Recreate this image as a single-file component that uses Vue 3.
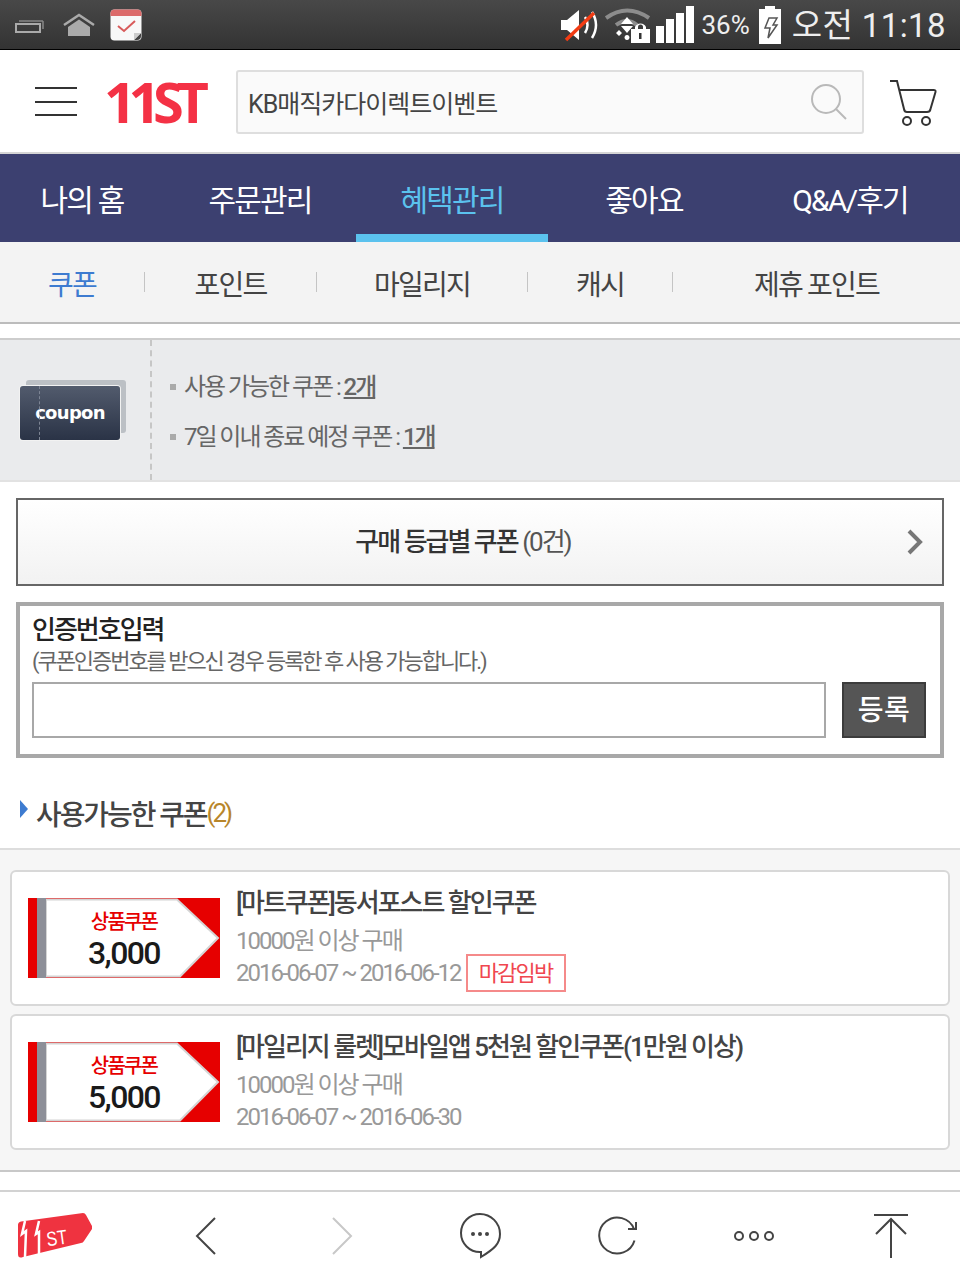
<template>
    <div class="page">
        <div class="status-bar">
            <div class="status-left">
                <svg class="ic-recent" width="30" height="16" viewBox="0 0 30 16" fill="none" stroke="#aaa" stroke-width="2">
                    <rect x="1" y="7" width="24" height="8" />
                    <path d="M4 4h24M28 4v8" stroke-width="1.5" stroke="#888" />
                </svg>
                <svg class="ic-home" width="32" height="24" viewBox="0 0 32 24">
                    <path d="M1 12L16 2l15 10" fill="none" stroke="#aaa" stroke-width="2.5" />
                    <path d="M5 14L16 6.500 27 14v9H5z" fill="#aaa" />
                </svg>
                <svg class="ic-cal" width="32" height="32" viewBox="0 0 32 32">
                    <rect width="31" height="31" x="0.500" y="0.500" rx="4" fill="#f8f8f8" />
                    <path d="M0.500 7V5a4 4 0 0 1 4-4.500h23a4 4 0 0 1 4 4.500v2z" fill="#dc6a6a" />
                    <path d="M8 17l6 5 11-10" fill="none" stroke="#d85a5a" stroke-width="2" />
                    <path d="M24 31l7-7v3a4 4 0 0 1-4 4z" fill="#444" />
                    <path d="M24 24h7l-7 7z" fill="#ccc" />
                </svg>
            </div>
            <div class="status-right">
                <svg width="40" height="34" viewBox="0 0 40 34" class="ic-sound">
                    <path d="M0 12h6l12-10v30l-12-10H0z" fill="#fff" />
                    <path d="M24 9q5 8 0 16M31 4q8 13 0 26" fill="none" stroke="#fff" stroke-width="2.500" />
                    <path d="M5 32L33 5" stroke="#f23c14" stroke-width="3.500" />
                </svg>
                <svg width="46" height="36" viewBox="0 0 46 36" class="ic-wifi">
                    <path d="M1 11q21-15 43 0" fill="none" stroke="#8c8c8c" stroke-width="4" />
                    <path d="M11 18q11-8 21 0" fill="none" stroke="#8c8c8c" stroke-width="4" />
                    <path d="M22 10l6 7H16zM16 19h12l-6 7z" fill="#fff" />
                    <path d="M14 23l-3 3 3 3 3-3zM22 28a2.500 2.500 0 1 0 .01 0z" fill="#fff" />
                    <path d="M30 22v-2a6 6 0 0 1 11 0v2h4v14H26V22z" fill="#fff" />
                    <path d="M33 22v-2a2.500 2.500 0 0 1 5 0v2z" fill="#3c3c3c" />
                    <rect x="34" y="26" width="2.500" height="6" fill="#333" />
                </svg>
                <div class="signal">
                    <i v-for="h in signalBars" :key="h" :style="{ height: `${h}px` }"></i>
                </div>
                <span class="battery-text">36%</span>
                <svg width="24" height="38" viewBox="0 0 24 38" class="ic-battery">
                    <path d="M7 0h10v3h6v35H1V3h6z" fill="#fff" />
                    <path d="M11 12h8l-4 7h4l-9 13 2-10H7z" fill="#fff" stroke="#555" stroke-width="1.500" />
                </svg>
                <span class="clock">오전 11:18</span>
            </div>
        </div>

        <header class="top-header">
            <button class="menu-btn" aria-label="menu"><i></i><i></i><i></i></button>
            <div class="logo">11ST</div>
            <div class="search-box">
                <span>KB매직카다이렉트이벤트</span>
                <svg width="38" height="38" viewBox="0 0 38 38" fill="none" stroke="#b9b9b9" stroke-width="2">
                    <circle cx="16" cy="16" r="14" />
                    <path d="M26 26l10 10" />
                </svg>
            </div>
            <svg class="cart" width="48" height="46" viewBox="0 0 48 46" fill="none" stroke="#333" stroke-width="2">
                <path d="M1 1h7l7 28q.5 3 3 3h20q3 0 3.500-3l5-17q.5-2-2-2H10" />
                <circle cx="18" cy="41" r="4" />
                <circle cx="37" cy="41" r="4" />
            </svg>
        </header>

        <nav class="main-nav">
            <div v-for="tab in mainTabs" :key="tab.label" class="main-tab" :class="{ active: tab.active }" :style="{ width: `${tab.width}px` }">
                {{ tab.label }}
            </div>
        </nav>

        <nav class="sub-nav">
            <div v-for="tab in subTabs" :key="tab.label" class="sub-tab" :class="{ active: tab.active }" :style="{ width: `${tab.width}px` }">
                <span>{{ tab.label }}</span>
            </div>
        </nav>

        <section class="summary">
            <div class="summary-icon">
                <div class="coupon-badge">
                    <div class="coupon-back"></div>
                    <div class="coupon-front">coupon</div>
                </div>
            </div>
            <ul class="summary-list">
                <li>사용 가능한 쿠폰 : <b>2개</b></li>
                <li>7일 이내 종료 예정 쿠폰 : <b>1개</b></li>
            </ul>
        </section>

        <div class="grade-btn">
            <span><b>구매 등급별 쿠폰</b> (0건)</span>
            <svg class="grade-arrow" width="16" height="26" viewBox="0 0 16 26" fill="none" stroke="#777" stroke-width="4">
                <path d="M2 2l11 11L2 24" />
            </svg>
        </div>

        <section class="auth-box">
            <h3>인증번호입력</h3>
            <p>(쿠폰인증번호를 받으신 경우 등록한 후 사용 가능합니다.)</p>
            <div class="auth-row">
                <div class="auth-input"></div>
                <button class="auth-submit">등록</button>
            </div>
        </section>

        <h2 class="list-title"><i></i>사용가능한 쿠폰<em>(2)</em></h2>

        <section class="coupon-list">
            <article v-for="c in coupons" :key="c.title" class="coupon-card">
                <div class="ticket">
                    <svg class="ticket-bg" width="192" height="80" viewBox="0 0 192 80">
                        <rect width="192" height="80" fill="#e60000" />
                        <path d="M18 1.500H149L190 40 152 78.500H18z" fill="#fff" stroke="#d4d4d4" stroke-width="2" />
                        <rect x="9" width="9" height="80" fill="#8d8f98" />
                    </svg>
                    <div class="ticket-label">상품쿠폰</div>
                    <div class="ticket-amount">{{ c.amount }}</div>
                </div>
                <div class="coupon-info">
                    <div class="coupon-title">{{ c.title }}</div>
                    <div class="coupon-cond">10000원 이상 구매</div>
                    <div class="coupon-date">
                        {{ c.date }}
                        <span v-if="c.closing" class="closing">마감임박</span>
                    </div>
                </div>
            </article>
        </section>

        <div class="spacer"></div>

        <footer class="bottom-bar">
            <svg class="logo-ic" width="76" height="46" viewBox="0 0 76 46">
                <path d="M2 12q0-3 3-3.500L67 0q2 0 3 2l6 11q1 2 0 3l-8 12q-1 2-3 2L7 44q-5 2-5-3z" fill="#ef3340" />
                <path d="M9 8l-3 13 4-3-1 26M23 8l-3 13 3-2v25" fill="none" stroke="#fff" stroke-width="2.500" />
            </svg>
            <span class="logo-st">ST</span>
            <svg class="ic-back" width="22" height="38" viewBox="0 0 22 38" fill="none" stroke="#444" stroke-width="2">
                <path d="M20 1L2 19l18 18" />
            </svg>
            <svg class="ic-forward" width="22" height="38" viewBox="0 0 22 38" fill="none" stroke="#c8c8c8" stroke-width="2">
                <path d="M2 1l18 18L2 37" />
            </svg>
            <svg class="ic-chat" width="42" height="46" viewBox="0 0 42 46" fill="none" stroke="#444" stroke-width="2">
                <path d="M21 1a20 20 0 0 1 20 20c0 10-6 15-19 23v-5h-1a19 19 0 0 1 0-38z" />
                <circle cx="14" cy="21" r="2" fill="#444" stroke="none" />
                <circle cx="21" cy="21" r="2" fill="#444" stroke="none" />
                <circle cx="28" cy="21" r="2" fill="#444" stroke="none" />
            </svg>
            <svg class="ic-refresh" width="40" height="40" viewBox="0 0 40 40" fill="none" stroke="#444" stroke-width="2">
                <path d="M37.500 24.500A18 18 0 1 1 37 13" />
                <path d="M39 6v7h-8" />
            </svg>
            <svg class="ic-more" width="40" height="12" viewBox="0 0 40 12" fill="none" stroke="#444" stroke-width="2">
                <circle cx="5" cy="6" r="4" />
                <circle cx="20" cy="6" r="4" />
                <circle cx="35" cy="6" r="4" />
            </svg>
            <svg class="ic-top" width="36" height="44" viewBox="0 0 36 44" fill="none" stroke="#444" stroke-width="2">
                <path d="M1 1h34" />
                <path d="M18 44V5M3 20L18 5l15 15" />
            </svg>
        </footer>
    </div>
</template>

<script setup>
const signalBars = [17, 24, 30, 37];

const mainTabs = [
    { label: "나의 홈", width: 164 },
    { label: "주문관리", width: 192 },
    { label: "혜택관리", width: 192, active: true },
    { label: "좋아요", width: 192 },
    { label: "Q&A/후기", width: 220 },
];

const subTabs = [
    { label: "쿠폰", width: 145, active: true },
    { label: "포인트", width: 172 },
    { label: "마일리지", width: 211 },
    { label: "캐시", width: 145 },
    { label: "제휴 포인트", width: 287 },
];

const coupons = [
    {
        title: "[마트쿠폰]동서포스트 할인쿠폰",
        amount: "3,000",
        date: "2016-06-07 ~ 2016-06-12",
        closing: true,
    },
    {
        title: "[마일리지 룰렛]모바일앱 5천원 할인쿠폰(1만원 이상)",
        amount: "5,000",
        date: "2016-06-07 ~ 2016-06-30",
        closing: false,
    },
];
</script>

<style>
html,
body {
    margin: 0;
    background: #fff;
}
</style>

<style scoped>
.page {
    width: 960px;
    height: 1280px;
    overflow: hidden;
    display: flex;
    flex-direction: column;
    font-family: Roboto, "Noto Sans CJK KR", sans-serif;
    color: #333;
    background: #fff;
}

/* status bar */
.status-bar {
    height: 49px;
    flex: none;
    display: flex;
    justify-content: space-between;
    align-items: center;
    background: linear-gradient(#484848, #333);
    border-bottom: 1px solid #000;
}

.status-left {
    display: flex;
    align-items: center;
    padding-left: 15px;
}

.ic-home {
    margin-left: 18px;
}

.ic-cal {
    margin-left: 15px;
}

.status-right {
    display: flex;
    align-items: center;
    padding-right: 14px;
}

.ic-sound {
    margin-right: 4px;
}

.signal {
    display: flex;
    align-items: flex-end;
    gap: 2px;
    height: 37px;
    margin: 0 7px 0 5px;
}

.signal i {
    display: block;
    width: 8px;
    background: #fff;
}

.battery-text {
    color: #eee;
    font-size: 26px;
    margin-right: 8px;
    letter-spacing: 0;
}

.clock {
    color: #eee;
    font-size: 33px;
    margin: 0 0 3px 10px;
    letter-spacing: 0.4px;
}

/* header */
.top-header {
    height: 102px;
    flex: none;
    display: flex;
    align-items: center;
    border-bottom: 2px solid #d5d5d5;
    padding-left: 35px;
}

.menu-btn {
    width: 42px;
    height: 29px;
    margin-top: 1px;
    padding: 0;
    border: 0;
    background: none;
    display: flex;
    flex-direction: column;
    justify-content: space-between;
    flex: none;
}

.menu-btn i {
    display: block;
    height: 2px;
    background: #333;
}

.logo {
    width: 132px;
    margin-left: 27px;
    flex: none;
    color: #f43145;
    font-family: "Open Sans", sans-serif;
    font-size: 56px;
    font-weight: 700;
    letter-spacing: -7.5px;
    line-height: 60px;
}

.search-box {
    width: 628px;
    height: 64px;
    margin-top: 2px;
    flex: none;
    display: flex;
    align-items: center;
    justify-content: space-between;
    padding: 0 14px 0 10px;
    box-sizing: border-box;
    border: 2px solid #dedede;
    border-radius: 3px;
    background: #fafafa;
    font-size: 25px;
    letter-spacing: -1px;
    color: #444;
}

.cart {
    margin: 4px 0 0 25px;
    flex: none;
}

/* nav */
.main-nav {
    height: 88px;
    flex: none;
    display: flex;
    background: #3c4070;
}

.main-tab {
    display: flex;
    align-items: center;
    justify-content: center;
    box-sizing: border-box;
    color: #fff;
    font-size: 30px;
    letter-spacing: -1.8px;
}

.main-tab.active {
    color: #5bc2ee;
    border-bottom: 8px solid #5bc2ee;
    padding-top: 8px;
}

.sub-nav {
    height: 80px;
    flex: none;
    display: flex;
    align-items: center;
    background: #f3f3f3;
    border-bottom: 2px solid #bcbcbc;
}

.sub-tab {
    height: 20px;
    display: flex;
    align-items: center;
    justify-content: center;
    font-size: 28px;
    letter-spacing: -1.8px;
    color: #444;
    border-right: 1px solid #c4c4c4;
    box-sizing: border-box;
}

.sub-tab span {
    margin-top: 2px;
}

.sub-tab:last-child {
    border-right: 0;
}

.sub-tab.active {
    color: #3d7bd0;
}

/* summary */
.summary {
    height: 144px;
    margin-top: 14px;
    flex: none;
    display: flex;
    box-sizing: border-box;
    background: #eaebed;
    border-top: 2px solid #cdcdcd;
    border-bottom: 2px solid #e2e2e2;
}

.summary-icon {
    width: 152px;
    flex: none;
    border-right: 2px dashed #c6c6c6;
    display: flex;
    padding: 38px 0 0 20px;
    box-sizing: border-box;
}

.coupon-badge {
    position: relative;
    width: 106px;
    height: 62px;
}

.coupon-back {
    position: absolute;
    left: 6px;
    top: 2px;
    width: 100px;
    height: 53px;
    border-radius: 3px;
    background: #bcc0c5;
}

.coupon-front {
    position: absolute;
    left: 0;
    top: 8px;
    width: 100px;
    height: 54px;
    box-sizing: border-box;
    border-radius: 3px;
    background: linear-gradient(#525b6d, #2a3346);
    color: #fff;
    font-family: "DejaVu Sans", sans-serif;
    font-size: 18px;
    font-weight: 700;
    line-height: 54px;
    text-align: center;
    letter-spacing: -0.7px;
    box-shadow: 0 0 0 1px #f2f2f2;
}

.coupon-front::before {
    content: "";
    position: absolute;
    left: 19px;
    top: 0;
    bottom: 0;
    border-left: 1px dashed #7d8594;
}

.summary-list {
    list-style: none;
    margin: 0;
    padding: 25px 0 0 18px;
    color: #666;
    font-size: 24px;
    letter-spacing: -2.05px;
}

.summary-list li {
    height: 50px;
    line-height: 44px;
    padding-left: 14px;
    position: relative;
}

.summary-list li::before {
    content: "";
    position: absolute;
    left: 0;
    top: 19px;
    width: 6px;
    height: 6px;
    background: #aaa;
}

.summary-list b {
    font-weight: 500;
    text-decoration: underline;
    color: #666;
}

/* grade button */
.grade-btn {
    position: relative;
    height: 88px;
    margin: 16px 16px 0;
    flex: none;
    box-sizing: border-box;
    display: flex;
    align-items: center;
    justify-content: center;
    padding: 0 34px 5px 0;
    border: 2px solid #666;
    background: linear-gradient(#fff, #f2f2f2);
    font-size: 26px;
    letter-spacing: -2px;
    color: #555;
}

.grade-btn b {
    font-weight: 500;
    color: #333;
}

.grade-arrow {
    position: absolute;
    right: 19px;
    top: 29px;
}

/* auth box */
.auth-box {
    height: 156px;
    margin: 16px 16px 0;
    flex: none;
    box-sizing: border-box;
    border: 4px solid #a8a8a8;
    padding: 6px 14px 0 12px;
}

.auth-box h3 {
    margin: 0;
    font-size: 26px;
    line-height: 36px;
    font-weight: 500;
    letter-spacing: -2px;
    color: #222;
}

.auth-box p {
    margin: 0;
    height: 34px;
    font-size: 22px;
    line-height: 28px;
    letter-spacing: -2.05px;
    color: #666;
}

.auth-row {
    display: flex;
    justify-content: space-between;
}

.auth-input {
    width: 794px;
    height: 56px;
    box-sizing: border-box;
    border: 2px solid #a8a8a8;
    background: #fff;
}

.auth-submit {
    width: 84px;
    height: 56px;
    box-sizing: border-box;
    padding: 0 0 4px;
    border: 2px solid #3c3c3c;
    background: #555;
    color: #fff;
    font-family: inherit;
    font-size: 28px;
    font-weight: 500;
    letter-spacing: 0.5px;
}

/* list */
.list-title {
    height: 92px;
    flex: none;
    margin: 0;
    box-sizing: border-box;
    display: flex;
    align-items: center;
    padding: 20px 0 0 20px;
    border-bottom: 2px solid #ddd;
    font-size: 28px;
    font-weight: 500;
    letter-spacing: -2.1px;
    color: #444;
}

.list-title i {
    width: 0;
    height: 0;
    border-left: 8px solid #3d7bd0;
    border-top: 9px solid transparent;
    border-bottom: 9px solid transparent;
    margin: 0 8px 8px 0;
}

.list-title em {
    font-style: normal;
    font-weight: 400;
    font-size: 26px;
    letter-spacing: -3px;
    color: #b8862b;
}

.coupon-list {
    height: 322px;
    flex: none;
    box-sizing: border-box;
    background: #f6f6f6;
    padding: 20px 10px 0;
    border-bottom: 2px solid #c8c8c8;
    display: flex;
    flex-direction: column;
    gap: 8px;
}

.coupon-card {
    height: 136px;
    flex: none;
    box-sizing: border-box;
    display: flex;
    border: 2px solid #d8d8d8;
    border-radius: 6px;
    background: #fff;
    padding: 0 0 0 16px;
}

.ticket {
    position: relative;
    width: 192px;
    height: 80px;
    margin-top: 26px;
    flex: none;
    text-align: center;
    padding: 11px 0 0 0;
    box-sizing: border-box;
}

.ticket-bg {
    position: absolute;
    left: 0;
    top: 0;
}

.ticket-label {
    position: relative;
    color: #e60000;
    font-size: 20px;
    line-height: 27px;
    letter-spacing: -1.8px;
    font-weight: 500;
}

.ticket-amount {
    position: relative;
    color: #1a1a1a;
    font-size: 32px;
    font-weight: 500;
    line-height: 34px;
    letter-spacing: -1.6px;
}

.coupon-info {
    margin-left: 16px;
    padding-top: 13px;
}

.coupon-title {
    font-size: 26px;
    line-height: 36px;
    letter-spacing: -2px;
    font-weight: 500;
    color: #444;
}

.coupon-cond {
    margin-top: 8px;
    font-size: 24px;
    line-height: 24px;
    letter-spacing: -2px;
    color: #999;
}

.coupon-date {
    display: flex;
    align-items: center;
    white-space: pre;
    font-size: 24px;
    height: 38px;
    margin-top: 1px;
    letter-spacing: -2px;
    color: #999;
}

.closing {
    margin-left: 1px;
    width: 100px;
    height: 38px;
    box-sizing: border-box;
    border: 2px solid #f58a8a;
    color: #f0474f;
    font-size: 22px;
    letter-spacing: -1.8px;
    text-align: center;
    line-height: 36px;
}

.spacer {
    height: 18px;
    flex: none;
}

.bottom-bar {
    position: relative;
    flex: 1;
    display: flex;
    align-items: center;
    box-sizing: border-box;
    border-top: 2px solid #d2d2d2;
    padding-left: 16px;
}

.ic-back {
    margin-left: 103px;
}

.ic-forward {
    margin-left: 114px;
}

.ic-chat {
    margin-left: 106px;
}

.ic-refresh {
    margin-left: 96px;
}

.ic-more {
    margin-left: 97px;
}

.ic-top {
    margin-left: 99px;
}

.logo-st {
    position: absolute;
    left: 44px;
    top: 35px;
    color: #fff;
    font-family: "Liberation Sans", sans-serif;
    font-size: 20px;
    letter-spacing: 0;
    transform: rotate(-8deg) scaleX(0.8);
}
</style>
